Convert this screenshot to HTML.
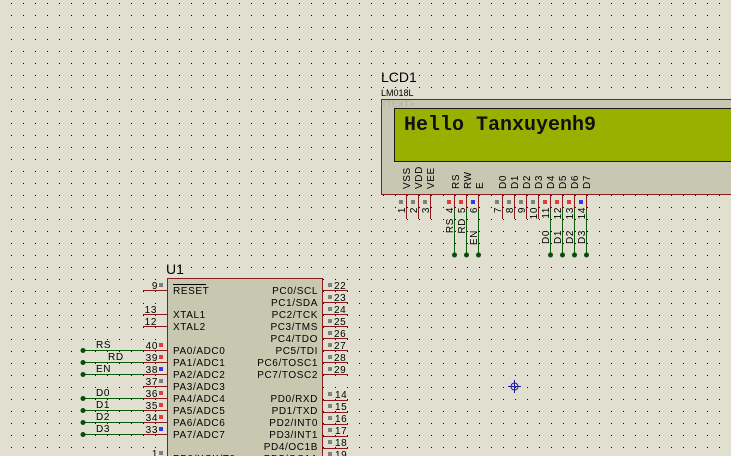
<!DOCTYPE html>
<html><head><meta charset="utf-8"><style>
html,body{margin:0;padding:0;width:731px;height:456px;overflow:hidden;background:#e0dfd0}
svg{display:block}
text{font-family:"Liberation Sans",sans-serif;font-size:10px;fill:#000}
.n{letter-spacing:0.6px}
</style></head><body>
<svg width="731" height="456" viewBox="0 0 731 456" xmlns="http://www.w3.org/2000/svg">
<defs>
<pattern id="g" x="0" y="0" width="12" height="12" patternUnits="userSpaceOnUse">
<rect x="11" y="3" width="1" height="1" fill="#000"/>
</pattern>
</defs>
<rect width="731" height="456" fill="#e0dfd0"/>
<rect width="731" height="456" fill="url(#g)"/>

<!-- LCD -->
<text x="381" y="82" style="font-size:14px">LCD1</text>
<text x="381" y="96" style="font-size:9px">LM018L</text>
<rect x="381.5" y="99.5" width="360" height="95" fill="#c8c8b2" stroke="#8b1a1a" stroke-width="1"/>
<text x="381" y="107" style="font-size:9px;fill:#b0b0a0">&lt;TEXT&gt;</text>
<rect x="394.5" y="108.5" width="350" height="53" fill="#99b000" stroke="#1a1a1a" stroke-width="1"/>
<text x="404" y="130" style="font-family:'Liberation Mono',monospace;font-size:20px;font-weight:bold;fill:#111">Hello Tanxuyenh9</text>

<g class="n" style="font-size:10px">
<text transform="translate(410,189) rotate(-90)">VSS</text>
<text transform="translate(422,189) rotate(-90)">VDD</text>
<text transform="translate(434,189) rotate(-90)">VEE</text>
<text transform="translate(459,189) rotate(-90)">RS</text>
<text transform="translate(471,189) rotate(-90)">RW</text>
<text transform="translate(483,189) rotate(-90)">E</text>
<text transform="translate(506,189) rotate(-90)">D0</text>
<text transform="translate(518,189) rotate(-90)">D1</text>
<text transform="translate(530,189) rotate(-90)">D2</text>
<text transform="translate(542,189) rotate(-90)">D3</text>
<text transform="translate(554,189) rotate(-90)">D4</text>
<text transform="translate(566,189) rotate(-90)">D5</text>
<text transform="translate(578,189) rotate(-90)">D6</text>
<text transform="translate(590,189) rotate(-90)">D7</text>
</g>

<g stroke="#8b1a1a" stroke-width="1">
<line x1="406.5" y1="195" x2="406.5" y2="219"/>
<line x1="418.5" y1="195" x2="418.5" y2="219"/>
<line x1="430.5" y1="195" x2="430.5" y2="219"/>
<line x1="454.5" y1="195" x2="454.5" y2="210"/>
<line x1="466.5" y1="195" x2="466.5" y2="210"/>
<line x1="478.5" y1="195" x2="478.5" y2="210"/>
<line x1="502.5" y1="195" x2="502.5" y2="219"/>
<line x1="514.5" y1="195" x2="514.5" y2="219"/>
<line x1="526.5" y1="195" x2="526.5" y2="219"/>
<line x1="538.5" y1="195" x2="538.5" y2="219"/>
<line x1="550.5" y1="195" x2="550.5" y2="210"/>
<line x1="562.5" y1="195" x2="562.5" y2="210"/>
<line x1="574.5" y1="195" x2="574.5" y2="210"/>
<line x1="586.5" y1="195" x2="586.5" y2="210"/>
</g>
<g stroke="#0a5a0a" stroke-width="1">
<line x1="454.5" y1="210" x2="454.5" y2="255"/>
<line x1="466.5" y1="210" x2="466.5" y2="255"/>
<line x1="478.5" y1="210" x2="478.5" y2="255"/>
<line x1="550.5" y1="210" x2="550.5" y2="255"/>
<line x1="562.5" y1="210" x2="562.5" y2="255"/>
<line x1="574.5" y1="210" x2="574.5" y2="255"/>
<line x1="586.5" y1="210" x2="586.5" y2="255"/>
</g>
<g fill="#0a4a0a">
<circle cx="454.5" cy="255" r="2.5"/><circle cx="466.5" cy="255" r="2.5"/><circle cx="478.5" cy="255" r="2.5"/>
<circle cx="550.5" cy="255" r="2.5"/><circle cx="562.5" cy="255" r="2.5"/><circle cx="574.5" cy="255" r="2.5"/><circle cx="586.5" cy="255" r="2.5"/>
</g>
<!-- LCD pin squares -->
<g>
<rect x="399" y="200" width="4" height="4" fill="#808080"/>
<rect x="411" y="200" width="4" height="4" fill="#808080"/>
<rect x="423" y="200" width="4" height="4" fill="#808080"/>
<rect x="447" y="200" width="4" height="4" fill="#e83838"/>
<rect x="459" y="200" width="4" height="4" fill="#e83838"/>
<rect x="471" y="200" width="4" height="4" fill="#3838e8"/>
<rect x="495" y="200" width="4" height="4" fill="#808080"/>
<rect x="507" y="200" width="4" height="4" fill="#808080"/>
<rect x="519" y="200" width="4" height="4" fill="#808080"/>
<rect x="531" y="200" width="4" height="4" fill="#808080"/>
<rect x="543" y="200" width="4" height="4" fill="#e83838"/>
<rect x="555" y="200" width="4" height="4" fill="#e83838"/>
<rect x="567" y="200" width="4" height="4" fill="#e83838"/>
<rect x="579" y="200" width="4" height="4" fill="#3838e8"/>
</g>
<g class="n" style="font-size:10px" text-anchor="end">
<text transform="translate(405,207) rotate(-90)">1</text>
<text transform="translate(417,207) rotate(-90)">2</text>
<text transform="translate(429,207) rotate(-90)">3</text>
<text transform="translate(453,207) rotate(-90)">4</text>
<text transform="translate(465,207) rotate(-90)">5</text>
<text transform="translate(477,207) rotate(-90)">6</text>
<text transform="translate(501,207) rotate(-90)">7</text>
<text transform="translate(513,207) rotate(-90)">8</text>
<text transform="translate(525,207) rotate(-90)">9</text>
<text transform="translate(537,207) rotate(-90)">10</text>
<text transform="translate(549,207) rotate(-90)">11</text>
<text transform="translate(561,207) rotate(-90)">12</text>
<text transform="translate(573,207) rotate(-90)">13</text>
<text transform="translate(585,207) rotate(-90)">14</text>
</g>
<g class="n" style="font-size:10px" text-anchor="end">
<text transform="translate(453,218) rotate(-90)">RS</text>
<text transform="translate(465,218) rotate(-90)">RD</text>
<text transform="translate(477,230) rotate(-90)">EN</text>
<text transform="translate(549,230) rotate(-90)">D0</text>
<text transform="translate(561,230) rotate(-90)">D1</text>
<text transform="translate(573,230) rotate(-90)">D2</text>
<text transform="translate(585,230) rotate(-90)">D3</text>
</g>

<!-- MCU -->
<text x="166" y="274" style="font-size:14px">U1</text>
<rect x="167.5" y="278.5" width="155" height="190" fill="#c8c8b0" stroke="#8b1a1a" stroke-width="1"/>

<!-- left pins -->
<g stroke="#8b1a1a" stroke-width="1">
<line x1="143" y1="290.5" x2="167" y2="290.5"/>
<line x1="143" y1="314.5" x2="167" y2="314.5"/>
<line x1="143" y1="326.5" x2="167" y2="326.5"/>
<line x1="143" y1="350.5" x2="167" y2="350.5"/>
<line x1="143" y1="362.5" x2="167" y2="362.5"/>
<line x1="143" y1="374.5" x2="167" y2="374.5"/>
<line x1="143" y1="386.5" x2="167" y2="386.5"/>
<line x1="143" y1="398.5" x2="167" y2="398.5"/>
<line x1="143" y1="410.5" x2="167" y2="410.5"/>
<line x1="143" y1="422.5" x2="167" y2="422.5"/>
<line x1="143" y1="434.5" x2="167" y2="434.5"/>
<line x1="143" y1="458.5" x2="167" y2="458.5"/>
</g>
<g stroke="#0a5a0a" stroke-width="1">
<line x1="83" y1="350.5" x2="143" y2="350.5"/>
<line x1="83" y1="362.5" x2="143" y2="362.5"/>
<line x1="83" y1="374.5" x2="143" y2="374.5"/>
<line x1="83" y1="398.5" x2="143" y2="398.5"/>
<line x1="83" y1="410.5" x2="143" y2="410.5"/>
<line x1="83" y1="422.5" x2="143" y2="422.5"/>
<line x1="83" y1="434.5" x2="143" y2="434.5"/>
</g>
<g fill="#0a4a0a">
<circle cx="83" cy="350.5" r="2.5"/><circle cx="83" cy="362.5" r="2.5"/><circle cx="83" cy="374.5" r="2.5"/>
<circle cx="83" cy="398.5" r="2.5"/><circle cx="83" cy="410.5" r="2.5"/><circle cx="83" cy="422.5" r="2.5"/><circle cx="83" cy="434.5" r="2.5"/>
</g>
<g class="n">
<text x="96" y="348">RS</text>
<text x="108" y="360">RD</text>
<text x="96" y="372">EN</text>
<text x="96" y="396">D0</text>
<text x="96" y="408">D1</text>
<text x="96" y="420">D2</text>
<text x="96" y="432">D3</text>
</g>
<g class="n" text-anchor="end">
<text x="158" y="289">9</text>
<text x="157" y="313">13</text>
<text x="157" y="325">12</text>
<text x="158" y="349">40</text>
<text x="158" y="361">39</text>
<text x="158" y="373">38</text>
<text x="158" y="385">37</text>
<text x="158" y="397">36</text>
<text x="158" y="409">35</text>
<text x="158" y="421">34</text>
<text x="158" y="433">33</text>
<text x="158" y="457">1</text>
</g>
<g>
<rect x="159" y="283" width="4" height="4" fill="#808080"/>
<rect x="159" y="343" width="4" height="4" fill="#e83838"/>
<rect x="159" y="355" width="4" height="4" fill="#e83838"/>
<rect x="159" y="367" width="4" height="4" fill="#3838e8"/>
<rect x="159" y="379" width="4" height="4" fill="#808080"/>
<rect x="159" y="391" width="4" height="4" fill="#e83838"/>
<rect x="159" y="403" width="4" height="4" fill="#e83838"/>
<rect x="159" y="415" width="4" height="4" fill="#e83838"/>
<rect x="159" y="427" width="4" height="4" fill="#3838e8"/>
<rect x="159" y="451" width="4" height="4" fill="#808080"/>
</g>
<g class="n">
<text x="173" y="294">RESET</text>
<line x1="173" y1="284.5" x2="206" y2="284.5" stroke="#000" stroke-width="1"/>
<text x="173" y="318">XTAL1</text>
<text x="173" y="330">XTAL2</text>
<text x="173" y="354">PA0/ADC0</text>
<text x="173" y="366">PA1/ADC1</text>
<text x="173" y="378">PA2/ADC2</text>
<text x="173" y="390">PA3/ADC3</text>
<text x="173" y="402">PA4/ADC4</text>
<text x="173" y="414">PA5/ADC5</text>
<text x="173" y="426">PA6/ADC6</text>
<text x="173" y="438">PA7/ADC7</text>
<text x="173" y="462">PB0/XCK/T0</text>
</g>

<!-- right pins -->
<g stroke="#8b1a1a" stroke-width="1">
<line x1="323" y1="290.5" x2="348" y2="290.5"/>
<line x1="323" y1="302.5" x2="348" y2="302.5"/>
<line x1="323" y1="314.5" x2="348" y2="314.5"/>
<line x1="323" y1="326.5" x2="348" y2="326.5"/>
<line x1="323" y1="338.5" x2="348" y2="338.5"/>
<line x1="323" y1="350.5" x2="348" y2="350.5"/>
<line x1="323" y1="362.5" x2="348" y2="362.5"/>
<line x1="323" y1="374.5" x2="348" y2="374.5"/>
<line x1="323" y1="400.5" x2="348" y2="400.5"/>
<line x1="323" y1="412.5" x2="348" y2="412.5"/>
<line x1="323" y1="424.5" x2="348" y2="424.5"/>
<line x1="323" y1="436.5" x2="348" y2="436.5"/>
<line x1="323" y1="448.5" x2="348" y2="448.5"/>
<line x1="323" y1="460.5" x2="348" y2="460.5"/>
</g>
<g fill="#808080">
<rect x="328" y="283" width="4" height="4"/><rect x="328" y="295" width="4" height="4"/>
<rect x="328" y="307" width="4" height="4"/><rect x="328" y="319" width="4" height="4"/>
<rect x="328" y="331" width="4" height="4"/><rect x="328" y="343" width="4" height="4"/>
<rect x="328" y="355" width="4" height="4"/><rect x="328" y="367" width="4" height="4"/>
<rect x="328" y="392" width="4" height="4"/><rect x="328" y="404" width="4" height="4"/>
<rect x="328" y="416" width="4" height="4"/><rect x="328" y="428" width="4" height="4"/>
<rect x="328" y="440" width="4" height="4"/><rect x="328" y="452" width="4" height="4"/>
</g>
<g class="n">
<text x="334" y="289">22</text><text x="334" y="301">23</text><text x="334" y="313">24</text>
<text x="334" y="325">25</text><text x="334" y="337">26</text><text x="334" y="349">27</text>
<text x="334" y="361">28</text><text x="334" y="373">29</text>
<text x="335" y="398">14</text><text x="335" y="410">15</text><text x="335" y="422">16</text>
<text x="335" y="434">17</text><text x="335" y="446">18</text><text x="335" y="458">19</text>
</g>
<g class="n" text-anchor="end">
<text x="318" y="294">PC0/SCL</text>
<text x="318" y="306">PC1/SDA</text>
<text x="318" y="318">PC2/TCK</text>
<text x="318" y="330">PC3/TMS</text>
<text x="318" y="342">PC4/TDO</text>
<text x="318" y="354">PC5/TDI</text>
<text x="318" y="366">PC6/TOSC1</text>
<text x="318" y="378">PC7/TOSC2</text>
<text x="318" y="402">PD0/RXD</text>
<text x="318" y="414">PD1/TXD</text>
<text x="318" y="426">PD2/INT0</text>
<text x="318" y="438">PD3/INT1</text>
<text x="318" y="450">PD4/OC1B</text>
<text x="318" y="462">PD5/OC1A</text>
</g>

<!-- crosshair -->
<g stroke="#1a1a9a" stroke-width="1" fill="none">
<circle cx="514.5" cy="386.5" r="3.5"/>
<line x1="508" y1="386.5" x2="521" y2="386.5"/>
<line x1="514.5" y1="380" x2="514.5" y2="393"/>
</g>
</svg>
</body></html>
